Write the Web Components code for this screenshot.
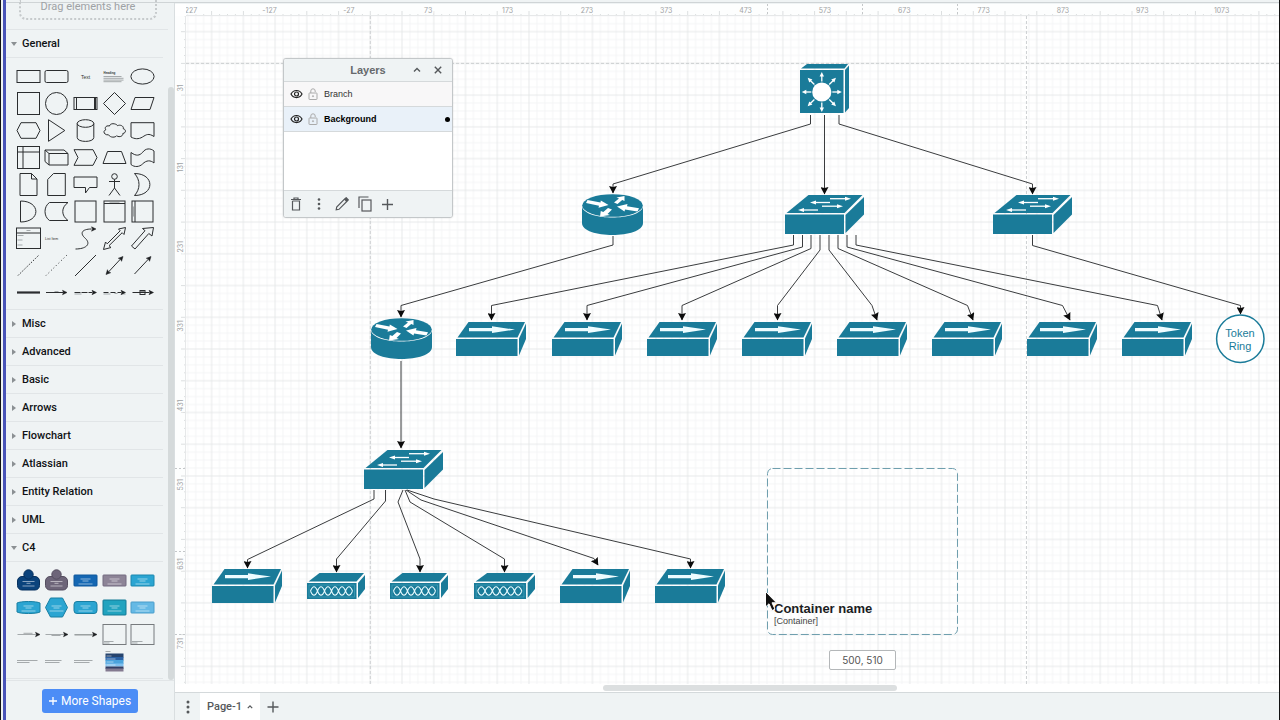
<!DOCTYPE html>
<html lang="en">
<head>
<meta charset="utf-8">
<meta name="viewport" content="width=device-width, initial-scale=1">
<title>Network diagram</title>
<style>
  :root {
    --chrome: #eff3f4;
    --line: #e1e5e7;
    --ink: #1b1d1f;
    --icon: #55585b;
    --muted: #9ea2a5;
    --teal: #1a7b99;
    --blue: #4c8df6;
  }
  body {
    margin: 0;
    font-family: Roboto, "Liberation Sans", sans-serif;
    color: var(--ink);
  }
</style>
</head>
<body>
<app-shell>
  <shape-sidebar slot="sidebar"></shape-sidebar>
  <diagram-board slot="board">
    <layers-panel slot="overlay"></layers-panel>
  </diagram-board>
  <page-tabs slot="tabs"></page-tabs>
</app-shell>

<script>
// Scale of the drawing surface: screen pixels per diagram unit, and the page origin.
const SCALE = 0.7934;
const ORIGIN = { x: 370.3, y: 63.4 };
// Scroll position of the view.
const PAN = { x: 186, y: 16 };

/* ---------- shape library ---------- */

const arrowHead = (x, y, deg = 0) =>
  `<path class="fill" transform="translate(${x} ${y}) rotate(${deg})" d="M0 0L-4.5 -2.2L-3.5 0L-4.5 2.2Z"/>`;

const generalShapes = [
  ['Rectangle', '<rect x="-11.5" y="-6" width="23" height="12"/>'],
  ['Rounded rectangle', '<rect x="-11.5" y="-6" width="23" height="12" rx="1.6"/>'],
  ['Text', '<text y="2" font-size="5" text-anchor="middle">Text</text>'],
  ['Textbox', '<text x="-11" y="-3" font-size="3" font-weight="700">Heading</text><path class="soft" d="M-11 0H7M-11 1.8H9M-11 3.6H9M-11 5.2H7"/>'],
  ['Ellipse', '<ellipse rx="11.6" ry="7.6"/>'],
  ['Square', '<rect x="-11" y="-11" width="22" height="22"/>'],
  ['Circle', '<circle r="11"/>'],
  ['Process', '<rect x="-11.5" y="-6" width="23" height="12"/><path d="M-9 -6V6M9 -6V6M10 -6V6"/>'],
  ['Diamond', '<path d="M0 -11L11 0L0 11L-11 0Z"/>'],
  ['Parallelogram', '<path d="M-7.5 -6H11.5L7.5 6H-11.5Z"/>'],
  ['Hexagon', '<path d="M-7.5 -7.8H7.5L11.5 0L7.5 7.8H-7.5L-11.5 0Z"/>'],
  ['Triangle', '<path d="M-8 -10.8L8.3 0L-8 10.8Z"/>'],
  ['Cylinder', '<path d="M-8.3 -7V7C-8.3 12.2 8.3 12.2 8.3 7V-7"/><ellipse cy="-7" rx="8.3" ry="3.8"/>'],
  ['Cloud', '<path d="M-5 -4.5C-9.5 -5.5 -10 -1.5 -8.500 -.8C-12.500 .5 -10 5 -6 4.300C-4 7.500 1 7 2 5.300C5.500 7.500 9 5 8.300 3C12 2.500 11.500 -1.300 8.800 -1.700C9.500 -5 5 -6 3.200 -4.800C1 -7.500 -4.500 -7.500 -5 -4.500Z"/>'],
  ['Document', '<path d="M-11.5 -7.8H11.5V6C6 2.500 4 4 0 6.500C-4 9 -8 8.500 -11.500 6.500Z"/>'],
  ['Internal storage', '<rect x="-11" y="-11" width="22" height="22"/><path d="M-11 -5.500H11M-5.500 -11V11"/>'],
  ['Cube', '<path d="M-11.5 -7.500H7.500L11.500 -4V7.500H-7.500L-11.500 4ZM-11.500 -7.500L-7.500 -4H11.500M-7.500 -4V7.500"/>'],
  ['Step', '<path d="M-11.500 -7.800H7.500L11.500 0L7.500 7.800H-11.500L-7.500 0Z"/>'],
  ['Trapezoid', '<path d="M-7 -6H7L11.500 6H-11.500Z"/>'],
  ['Tape', '<path d="M-11.500 -5C-6 -1 -3 -2 0 -5C3 -9.500 8 -9.500 11.500 -6.500V5.500C8 2.500 4 2.500 0 6.500C-3 9.500 -8 10 -11.500 7Z"/>'],
  ['Note', '<path d="M-8.500 -11H3L8.500 -5.500V11H-8.500ZM3 -11V-5.500H8.500"/>'],
  ['Card', '<path d="M-3 -11H8.800V11H-8.800V-5Z"/>'],
  ['Callout', '<path d="M-11.500 -7.500H11.500V3H4L0 8.500V3H-11.500Z"/>'],
  ['Actor', '<circle cy="-8" r="2.800"/><path d="M0 -5.200V3.500M-5.500 -3H5.500M0 3.500L-5.500 11M0 3.500L5.500 11"/>'],
  ['Or', '<path d="M-8 -11C12.500 -11 12.500 11 -8 11C-2 4.500 -2 -4.500 -8 -11Z"/>'],
  ['And', '<path d="M-8 -10.500C12.500 -10.500 12.500 10.500 -8 10.500Z"/>'],
  ['Data storage', '<path d="M-7 -9H11.500C4.500 -4 4.500 4 11.500 9H-7C-13 5 -13 -5 -7 -9Z"/>'],
  ['Container', '<rect x="-10.500" y="-10.500" width="21" height="21"/>'],
  ['Titled container', '<rect x="-10.500" y="-10.500" width="21" height="21"/><path d="M-10.500 -8H10.500"/><path class="soft" d="M-5 -9.300H5"/>'],
  ['Horizontal container', '<rect x="-10.500" y="-10.500" width="21" height="21"/><path d="M-7.500 -10.500V10.500"/><path class="soft" d="M-9 -5V5"/>'],
  ['List', '<rect x="-12" y="-10.500" width="24" height="20.500"/><path d="M-12 -5.500H12"/><path class="soft" d="M-2 -8H2M-11 -3H-5M-11 1.500H-6M-11 6.500H-6"/>'],
  ['List item', '<text x="-11.500" y="1" font-size="3.500">List Item</text>'],
  ['Curve', '<path d="M-10 10.500C0 10.500 6 6 0 0C-6 -5 -4 -9.500 6 -9.500"/>' + arrowHead(10.5, -9.5)],
  ['Bidirectional arrow', '<path d="M11 -11L9.500 -4L7.700 -5.800L-5.500 7.200L-3.500 9L-11 11L-9 3.500L-7.300 5.300L5.700 -7.700L4 -9.500Z"/>'],
  ['Arrow', '<path d="M11 -11L9.500 -2.500L6.300 -5L-7.500 10.500L-11 7.500L2.500 -7.800L0 -10Z"/>'],
  ['Dashed line', '<path d="M-10.500 10L10.500 -10.500" stroke-dasharray="1.500 1.500"/>'],
  ['Dotted line', '<path d="M-10.500 10L10.500 -10.500" stroke-dasharray="1 2.500"/>'],
  ['Line', '<path d="M-10.500 10.500L10.500 -10.500"/>'],
  ['Bidirectional connector', '<path d="M-6.500 7L6.500 -7"/>' + arrowHead(8.5, -9, -47) + arrowHead(-8.5, 9, 133)],
  ['Directional connector', '<path d="M-8 8.500L6.500 -7"/>' + arrowHead(8.5, -9, -47)],
  ['Link', '<path d="M-11.500 0H11.500" stroke-width="2.200"/>'],
  ['Connector with label', '<path d="M-10.500 0H7"/><path class="soft" d="M-2 -1H2"/>' + arrowHead(10.5, 0)],
  ['Connector with two labels', '<path d="M-11 0H7" stroke-dasharray="6 1"/><path class="soft" d="M-11 1.500H-4"/>' + arrowHead(11, 0)],
  ['Connector with three labels', '<path d="M-11 0H7" stroke-dasharray="5 2"/><path class="soft" d="M-11 1.500H-4M0 1H3M8 1.500H11"/>' + arrowHead(11, 0)],
  ['Connector with symbol', '<path d="M-10 0H7"/><rect x="-2.500" y="-2" width="5" height="4"/><path d="M-2 -.5H2"/>' + arrowHead(11, 0)]
];

const caption = '<path class="label" d="M-5 -1.500H5M-3 .5H3M-7 3.500H7"/>';
const personShape = (fill, stroke) => `<g fill="${fill}" stroke="${stroke}">
  <rect x="-11" y="-4" width="22" height="13.500" rx="4.500"/><circle cy="-6" r="4.700"/></g>
  <path class="label" d="M-6 1H6M-2 2.800H2M-6 5.500H6"/>`;
const boxShape = (fill, stroke, h = 11, rx = 0.6) =>
  `<rect x="-11.500" y="${-h / 2}" width="23" height="${h}" rx="${rx}" fill="${fill}" stroke="${stroke}"/>${caption}`;

const c4Shapes = [
  ['Person', personShape('#0b437c', '#07315e')],
  ['External person', personShape('#6d6579', '#554e60')],
  ['Software system', boxShape('#1467b3', '#0f589c')],
  ['External system', boxShape('#8d8497', '#736a80')],
  ['Container', boxShape('#2ba5d2', '#1b87ae')],
  ['Database', `<path d="M-11.500 -4.500C-8 -6.500 8 -6.500 11.500 -4.500V4.500C8 6.500 -8 6.500 -11.500 4.500Z" fill="#2ba5d2" stroke="#197fa2"/>${caption}`],
  ['Microservice', `<path d="M-6 -9.500H6L11 0L6 9.500H-6L-11 0Z" fill="#2ba5d2" stroke="#197fa2"/>${caption}`],
  ['Message bus', boxShape('#2ba5d2', '#197fa2', 12, 3)],
  ['Web browser', boxShape('#21a3bf', '#147b96', 15)],
  ['Component', boxShape('#65b9e5', '#4a9dca')],
  ['Relationship', '<path class="soft" d="M-11 0H8M-5 -1.200H4"/>' + arrowHead(11.5, 0)],
  ['Relationship, short', '<path class="soft" d="M-11 0H8M-5 1H4"/>' + arrowHead(11.5, 0)],
  ['Relationship, plain', '<path class="soft" d="M-11 0H9"/><path class="soft" d="M-11 .6H9"/>' + arrowHead(11.5, 0)],
  ['System boundary', '<rect class="frame" x="-11.500" y="-10" width="23" height="20"/><path class="soft" d="M-10.500 7H-1M-10.500 8.500H-5"/>'],
  ['Container boundary', '<rect class="frame" x="-11.500" y="-10" width="23" height="20"/><path class="soft" d="M-10.500 7H0M-10.500 8.500H-5"/>'],
  ['Title', '<path class="soft" d="M-11.500 -1H9M-11.500 1H1"/>'],
  ['Subtitle', '<path class="soft" d="M-11.500 -1H5M-11.500 1H3"/>'],
  ['Description', '<path class="soft" d="M-11.500 -1H7M-11.500 1H4"/>'],
  ['Legend', `<path class="soft" d="M-9 -10H-4"/>
    <rect x="-9" y="-8" width="18" height="4" fill="#26446e" stroke="none"/><rect x="-9" y="-4.500" width="18" height="3.500" fill="#2b62a5" stroke="none"/>
    <rect x="-9" y="-1.500" width="18" height="4" fill="#4aa3dc" stroke="none"/><rect x="-9" y="2" width="18" height="3" fill="#7fc0ee" stroke="none"/>
    <rect x="-9" y="5" width="18" height="2.500" fill="#333f66" stroke="none"/><rect x="-9" y="7" width="18" height="3" fill="#847a90" stroke="none"/>
    <path class="label" d="M-8 -5.500H-3M-8 -2.500H1M-8 .5H-1M-8 3.500H1"/>`]
];

/* ---------- network symbols, each with its own drawing box ---------- */

const thinArrow = (x1, x2, y) => {
  const d = x2 > x1 ? -1 : 1;
  return `<path d="M${x1} ${y}H${x2 + d * 5}" stroke="#fff" stroke-width="1.300"/><path d="M${x2} ${y}L${x2 + d * 6} ${y - 2}V${y + 2}Z" fill="#fff"/>`;
};

const spoke = deg => `<g transform="translate(21.800 28) rotate(${deg})">
  <path d="M10.500 0H17" stroke="#fff" stroke-width="1.300"/><path d="M20 0L15.500 -2.200V2.200Z" fill="#fff"/></g>`;

const waves = () => {
  let a = 'M3.5 8';
  let b = 'M3.5 8';
  for (let i = 0; i < 6; i++) {
    const up = i % 2 ? 8.4 : -8.4;
    a += `q3.500 ${up} 7 0`;
    b += `q3.500 ${-up} 7 0`;
  }
  return `<g transform="translate(0 10)">
    <rect x="2" y="2" width="45.500" height="12" fill="none" stroke="#4ba9c2" stroke-width=".600"/>
    <path d="${a}${b}" fill="none" stroke="#e8fbff" stroke-width="1.100"/></g>`;
};

const symbols = {
  core: {
    w: 49, h: 49,
    art: `<path d="M1 4.500L7 0H48L44.500 4.500Z"/><path d="M45 6L49 1.500V44L45 48.500Z"/><rect y="6" width="43.500" height="43"/>
      <circle cx="21.800" cy="28" r="9.600" fill="#fff"/>${[0, 45, 90, 135, 180, 225, 270, 315].map(spoke).join('')}`
  },
  router: {
    w: 61, h: 41,
    art: `<path d="M0 13C4 27 57 27 61 13V29C61 45 0 45 0 29Z"/><ellipse cx="30.500" cy="11.500" rx="30.300" ry="11.300"/>
      <g fill="#fff"><path d="M5.500 6L18.500 8.500L18.800 6.500L26.500 11L16.500 13.700L17 11.700L4 9Z"/>
      <path d="M55.500 17.500L43 15.500L42.500 17.500L35 12.500L45.500 10L45 12.200L57 14.300Z"/>
      <path d="M32 8.500L37 4.500L34.500 3.500L42.500 2L42.500 7L40.200 6L35.500 10Z"/>
      <path d="M30 15.500L25.500 20L28 21L18 22.500L18.800 17L21.300 18L26 14Z"/></g>`
  },
  switch: {
    w: 79, h: 39,
    art: `<path d="M1.500 18L23.500 0H77.500L59.500 18Z"/><path d="M60.500 20L79 2V19.500L60.500 38Z"/><rect y="19.500" width="59" height="19.500"/>
      ${thinArrow(45, 66, 3.7)}${thinArrow(45, 25, 7.5)}${thinArrow(37, 58, 11.2)}${thinArrow(33, 13, 15)}`
  },
  access: {
    w: 70, h: 34,
    art: `<path d="M1.500 15.500L12.500 0H69L61.500 15.500Z"/><path d="M63 16.500L70 1.500V17L63 33.500Z"/><rect y="17" width="61.500" height="17"/>
      <path d="M13 6H36V4.300L59 7.600L36 11V9.300H13Z" fill="#eefcff"/>`
  },
  hub: {
    w: 58, h: 26,
    art: `<path d="M1.500 8.500L12.500 0H57L49.500 8.500Z"/><path d="M51 10L58 2V16L51 25Z"/><rect y="10" width="49.500" height="16"/>${waves()}`
  }
};

const nodes = [
  ['core', 800, 64], ['router', 582, 194], ['switch', 785, 195], ['switch', 993, 195],
  ['router', 371, 318], ['switch', 364, 450],
  ['access', 456, 322], ['access', 552, 322], ['access', 647, 322], ['access', 742, 322],
  ['access', 837, 322], ['access', 932, 322], ['access', 1027, 322], ['access', 1122, 322],
  ['access', 212, 569], ['hub', 307, 573], ['hub', 390, 573], ['hub', 474, 573, 61],
  ['access', 560, 569], ['access', 655, 569]
];

const edges = [
  '810.500,115 810.500,124 613,184 613,193', '824.500,115 824.500,194', '839,115 839,124 1032.500,184 1032.500,194',
  '613,236 613,245 401,305.500 401,317', '1032.500,235 1032.500,245.500 1240.500,305.500 1240.500,314',
  '793.500,235 793.500,245 491.500,305.500 491.500,320', '802.500,235 802.500,247 587,305.500 587,320',
  '811,235 811,248.500 682,305.500 682,320', '820,235 820,250 777.500,305.500 777.500,320',
  '829,235 829,250 872,305.500 877,320', '838,235 838,248.500 967.500,305.500 973,320',
  '847,235 847,247 1062.500,305.500 1070,320', '856,235 856,245 1157.500,305.500 1162,320',
  '401,361 401,448',
  '374,490 374,499 247.500,559.500 247.500,568', '385.500,490 385.500,501 336.500,559 336.500,572',
  '403,490 398,502 420,559 420,572', '405,490 410,502 504.500,559 504.500,572',
  '406,490 421,500 594,558.500 598,565', '407,490 434,499 690.500,559 690.500,568'
];

/* ---------- elements ---------- */

class AppShell extends HTMLElement {
  constructor() {
    super();
    this.attachShadow({ mode: 'open' }).innerHTML = `
      <style>
        :host {
          display: grid;
          grid-template-columns: auto 169px minmax(0, 1fr);
          grid-template-rows: 3px minmax(0, 1fr) auto;
          height: 100vh;
          box-sizing: border-box;
          border-right: 1px solid #111;
          background: var(--chrome);
        }
        .edge {
          grid-row: 1 / 4;
          width: 2px;
          border-left: 1px solid #111;
          border-right: 3px solid #4954b8;
        }
        .top {
          grid-column: 2 / 4;
          border-bottom: 1px solid #cfd4d6;
        }
        slot[name="sidebar"]::slotted(*) { grid-column: 2; grid-row: 2 / 4; }
        slot[name="board"]::slotted(*) { grid-column: 3; }
        slot[name="tabs"]::slotted(*) { grid-column: 3; }
      </style>
      <div class="edge"></div>
      <div class="top"></div>
      <slot name="sidebar"></slot>
      <slot name="board"></slot>
      <slot name="tabs"></slot>
    `;
  }
}

class ShapeThumb extends HTMLElement {
  constructor() {
    super();
    this.attachShadow({ mode: 'open' });
  }

  set shape([label, art]) {
    this.shadowRoot.innerHTML = `
      <style>
        :host { display: block; }
        button {
          display: flex;
          align-items: center;
          justify-content: center;
          width: 100%;
          height: 27px;
          padding: 0;
          border: 0;
          background: none;
          cursor: grab;
        }
        svg {
          flex: none;
          overflow: visible;
          fill: none;
          stroke: #2b2d2f;
          stroke-width: 1;
        }
        text { fill: #333; stroke: none; font-family: "Liberation Sans", sans-serif; }
        .fill { fill: #1b1d1f; stroke: #1b1d1f; stroke-width: .5; }
        .soft { stroke: #85898c; stroke-width: .7; }
        .frame { stroke: #777b7e; }
        .label { stroke: #fff; stroke-width: .8; opacity: .65; }
      </style>
      <button type="button" aria-label="${label}">
        <svg width="27" height="27" viewBox="-13.5 -13.5 27 27">${art}</svg>
      </button>
    `;
  }
}

class SidebarSection extends HTMLElement {
  constructor() {
    super();
    this.attachShadow({ mode: 'open' }).innerHTML = `
      <style>
        :host { display: block; border-bottom: 1px solid var(--line); margin-right: 5px; }
        button {
          display: flex;
          align-items: center;
          gap: 5px;
          width: 100%;
          height: 27px;
          padding: 0 0 0 5px;
          border: 0;
          background: none;
          font: 500 11px/16px Roboto, "Liberation Sans", sans-serif;
          color: #101214;
          text-align: left;
          cursor: pointer;
        }
        svg { fill: #8b9093; }
        .content { display: none; border-top: 1px solid var(--line); }
        :host([open]) .content { display: block; }
        :host([open]) svg { transform: rotate(90deg); }
      </style>
      <button type="button" aria-expanded="false">
        <svg width="6" height="8" viewBox="0 0 6 8"><path d="M1 1L5 4L1 7Z"/></svg>
        <slot name="title"></slot>
      </button>
      <div class="content"><slot></slot></div>
    `;
  }

  connectedCallback() {
    const button = this.shadowRoot.querySelector('button');
    button.setAttribute('aria-expanded', this.hasAttribute('open'));
    button.addEventListener('click', () => {
      this.toggleAttribute('open');
      button.setAttribute('aria-expanded', this.hasAttribute('open'));
    });
  }
}

class ShapeGrid extends HTMLElement {
  constructor() {
    super();
    this.attachShadow({ mode: 'open' }).innerHTML = `
      <style>
        :host {
          display: grid;
          grid-template-columns: repeat(5, minmax(0, 1fr));
          padding: 5px 6px 3px 8px;
        }
      </style>
    `;
  }

  connectedCallback() {
    const shapes = this.getAttribute('library') === 'c4' ? c4Shapes : generalShapes;
    shapes.forEach(shape => {
      const thumb = document.createElement('shape-thumb');
      thumb.shape = shape;
      this.shadowRoot.appendChild(thumb);
    });
  }
}

class ShapeSidebar extends HTMLElement {
  constructor() {
    super();
    const closed = ['Misc', 'Advanced', 'Basic', 'Arrows', 'Flowchart', 'Atlassian', 'Entity Relation', 'UML'];
    this.attachShadow({ mode: 'open' }).innerHTML = `
      <style>
        :host {
          display: flex;
          flex-direction: column;
          box-sizing: border-box;
          min-height: 0;
          border-right: 1px solid #d9dee0;
        }
        .body { display: flex; flex: 1; min-height: 0; }
        .list { flex: 1; min-width: 0; }
        .scratch {
          display: flex;
          align-items: flex-end;
          height: 17px;
          padding: 0 11px 9px 13px;
          border-bottom: 1px solid var(--line);
        }
        .drop {
          flex: 1;
          height: 18px;
          border: 2px dotted #c6cacc;
          border-top: 0;
          border-radius: 0 0 7px 7px;
          font-size: 11px;
          line-height: 14px;
          text-align: center;
          color: var(--muted);
        }
        .track { width: 6px; padding-top: 84px; display: flex; }
        .thumb { flex: 1; border-radius: 3px; background: #d5dadb; }
        footer {
          display: flex;
          justify-content: center;
          align-items: center;
          height: 39px;
          border-top: 1px solid var(--line);
        }
        .more {
          height: 24px;
          padding: 0 7px;
          border: 0;
          border-radius: 3px;
          background: var(--blue);
          color: #fff;
          font: 400 12px/24px Roboto, "Liberation Sans", sans-serif;
          display: flex;
          align-items: center;
          gap: 4px;
        }
      </style>
      <div class="body">
        <div class="list">
          <div class="scratch"><div class="drop">Drag elements here</div></div>
          <sidebar-section open><span slot="title">General</span><shape-grid library="general"></shape-grid></sidebar-section>
          ${closed.map(name => `<sidebar-section><span slot="title">${name}</span></sidebar-section>`).join('')}
          <sidebar-section open><span slot="title">C4</span><shape-grid library="c4"></shape-grid></sidebar-section>
        </div>
        <div class="track"><div class="thumb"></div></div>
      </div>
      <footer>
        <button class="more" type="button">
          <svg width="8" height="8" viewBox="0 0 8 8" stroke="#fff" stroke-width="1.300"><path d="M4 0V8M0 4H8"/></svg>
          More Shapes
        </button>
      </footer>
    `;
  }
}

class BoardRuler extends HTMLElement {
  constructor() {
    super();
    this.attachShadow({ mode: 'open' });
  }

  connectedCallback() {
    const vertical = this.hasAttribute('vertical');
    const first = vertical ? 31 : -227;
    const count = vertical ? 8 : 14;
    const zero = vertical ? ORIGIN.y - PAN.y : ORIGIN.x - PAN.x;
    const guides = vertical ? [468.5, 551.5, 634.5] : [767.5, 862.5, 957.5];
    let ticks = '';
    let labels = '';
    for (let i = 0; i < 220; i++) {
      const pos = (zero + (i - 30) * 10 * SCALE).toFixed(1);
      const len = (i - 30) % 4 === 0 ? 5 : 2;
      ticks += vertical ? `M11 ${pos}h${-len}` : `M${pos} 12v${-len}`;
    }
    for (let i = 0; i < count; i++) {
      const value = first + i * 100;
      const pos = (zero + value * SCALE).toFixed(1);
      const text = i === 0 && !vertical ? '227' : value;
      labels += vertical
        ? `<text transform="translate(8 ${pos}) rotate(-90)">${text}</text>`
        : `<text x="${i === 0 ? 5 : pos}" y="9">${text}</text>`;
    }
    const marks = guides.map(g => vertical ? `M0 ${g - PAN.y}H11` : `M${g - PAN.x} 0V12`).join('');
    this.shadowRoot.innerHTML = `
      <style>
        :host { display: block; min-width: 0; min-height: 0; background: #fdfefe; overflow: hidden; }
        svg { display: block; width: 100%; height: 100%; overflow: ${vertical ? 'hidden' : 'visible'}; }
        text {
          font: 7px Inter, "Liberation Sans", sans-serif;
          fill: #9fa2a4;
          text-anchor: middle;
          paint-order: stroke;
          stroke: #fdfefe;
          stroke-width: 3px;
        }
      </style>
      <svg>
        <path d="${ticks}" stroke="#dcdfe0" stroke-width="1"/>
        <path d="${vertical ? 'M10.500 0V2000' : 'M0 11.500H4000'}" stroke="#e6e8e9"/>
        <path d="${marks}" stroke="#c4c7c9" stroke-dasharray="2 2"/>
        ${labels}
      </svg>
    `;
  }
}

class NetNode extends HTMLElement {
  constructor() {
    super();
    this.attachShadow({ mode: 'open' });
  }

  connectedCallback() {
    const { w, h, art } = symbols[this.getAttribute('kind')];
    const width = this.getAttribute('width') || w;
    this.shadowRoot.innerHTML = `
      <style>
        :host { display: block; position: absolute; }
        svg { display: block; overflow: visible; fill: var(--teal); }
      </style>
      <svg width="${width}" height="${h}" viewBox="0 0 ${w} ${h}" preserveAspectRatio="none">${art}</svg>
    `;
  }
}

class DiagramBoard extends HTMLElement {
  constructor() {
    super();
    const ox = ORIGIN.x - PAN.x;
    const oy = ORIGIN.y - PAN.y;
    this.attachShadow({ mode: 'open' }).innerHTML = `
      <style>
        :host {
          display: grid;
          grid-template-columns: 11px minmax(0, 1fr);
          grid-template-rows: 12px minmax(0, 1fr) 8px;
          padding-top: 1px;
          min-height: 0;
          background: #fff;
          background-clip: content-box;
        }
        .surface { position: relative; overflow: hidden; }
        .surface > svg { display: block; width: 100%; height: 100%; }
        .edges polyline { fill: none; stroke: #3a3c3e; stroke-width: 1; }
        .ring {
          position: absolute;
          width: 48px;
          height: 36px;
          padding-top: 12px;
          color: var(--teal);
          font: 11px/13px "Liberation Sans", sans-serif;
          text-align: center;
        }
        .drag {
          position: absolute;
          box-sizing: border-box;
          width: 191px;
          height: 167px;
          display: flex;
          flex-direction: column;
          justify-content: flex-end;
          padding: 0 7px 8px;
          font-family: "Liberation Sans", sans-serif;
        }
        .drag svg { position: absolute; inset: 0; width: 100%; height: 100%; }
        .drag strong { font-size: 13px; line-height: 15px; }
        .drag span { font-size: 9px; line-height: 11px; color: #444; }
        .hint {
          position: absolute;
          box-sizing: border-box;
          width: 67px;
          height: 20px;
          border: 1px solid #b4b7b9;
          border-radius: 2px;
          background: #fff;
          color: #555;
          font: 10px/18px Inter, "Liberation Sans", sans-serif;
          text-align: center;
        }
        .cursor { position: absolute; }
        .scroll { grid-column: 1 / 3; display: flex; padding: 1px 0 1px; }
        .bar { flex: 294; border-radius: 3px; background: #dcdfe0; }
        .before { flex: 428; }
        .after { flex: 382; }
      </style>
      <div></div>
      <board-ruler></board-ruler>
      <board-ruler vertical></board-ruler>
      <div class="surface">
        <svg>
          <defs>
            <pattern id="grid" width="40" height="40" patternUnits="userSpaceOnUse" patternTransform="translate(${ox} ${oy}) scale(${SCALE})">
              <path d="M10 0V40M20 0V40M30 0V40M0 10H40M0 20H40M0 30H40" stroke="#f4f5f6" stroke-width="1.200"/>
              <path d="M0 0H40M0 0V40M40 0V40M0 40H40" fill="none" stroke="#e6e8e9" stroke-width="1.200"/>
            </pattern>
            <marker id="tip" markerWidth="9" markerHeight="8" refX="7" refY="4" orient="auto" markerUnits="userSpaceOnUse">
              <path d="M0 0L7.500 4L0 8L1 4Z" fill="#0c0c0c"/>
            </marker>
          </defs>
          <rect width="100%" height="100%" fill="url(#grid)"/>
          <g stroke="#cdd0d2" stroke-dasharray="3 2">
            <path d="M${ox} 0V2000M${ox + 827 * SCALE} 0V2000M0 ${oy}H4000"/>
          </g>
          <g class="edges" transform="translate(${-PAN.x} ${-PAN.y})">
            ${edges.map(points => `<polyline points="${points}" marker-end="url(#tip)"/>`).join('')}
            <circle cx="1240.300" cy="338.700" r="23.700" fill="#fff" stroke="#1a7b99" stroke-width="1.500"/>
          </g>
        </svg>
        <div class="nodes"></div>
        <div class="ring" style="left: 1030px; top: 299px">Token Ring</div>
        <div class="drag" style="left: 581px; top: 452px">
          <svg><rect x=".5" y=".5" width="190" height="166" rx="5" fill="none" stroke="#6f9fae" stroke-dasharray="8 3"/></svg>
          <strong>Container name</strong>
          <span>[Container]</span>
        </div>
        <div class="hint" style="left: 643px; top: 634px">500, 510</div>
        <svg class="cursor" style="left: 578px; top: 574px; width: 14px; height: 22px" viewBox="0 0 14 22">
          <path d="M1.500 1.500V17L5 13.800L8 20.500L11 19.200L8 12.800H12.500Z" fill="#111" stroke="#fff" stroke-width="1"/>
        </svg>
        <slot name="overlay"></slot>
      </div>
      <div class="scroll"><div class="before"></div><div class="bar"></div><div class="after"></div></div>
    `;
  }

  connectedCallback() {
    const layer = this.shadowRoot.querySelector('.nodes');
    nodes.forEach(([kind, x, y, width]) => {
      const node = document.createElement('net-node');
      node.setAttribute('kind', kind);
      if (width) node.setAttribute('width', width);
      node.style.left = `${x - PAN.x}px`;
      node.style.top = `${y - PAN.y}px`;
      layer.appendChild(node);
    });
  }
}

class LayerRow extends HTMLElement {
  constructor() {
    super();
    this.attachShadow({ mode: 'open' }).innerHTML = `
      <style>
        :host {
          display: flex;
          align-items: center;
          height: 24px;
          padding: 0 2px 0 6px;
          border-bottom: 1px solid #d5d9db;
          background: #f8f7f8;
          font: 9px/12px "Liberation Sans", sans-serif;
          color: #333;
        }
        :host([current]) { background: #e9f1f9; font-weight: 700; color: #000; }
        button { display: flex; padding: 0; border: 0; background: none; }
        .lock { margin: 0 6px 0 5px; }
        .name { flex: 1; }
        .dot { display: none; width: 5px; height: 5px; border-radius: 50%; background: #000; }
        :host([current]) .dot { display: block; }
      </style>
      <button type="button" aria-label="Show layer">
        <svg width="13" height="12" viewBox="0 0 13 12" fill="none" stroke="#222" stroke-width="1.200">
          <path d="M1 6C3.500 1.300 9.500 1.300 12 6C9.500 10.700 3.500 10.700 1 6Z"/><circle cx="6.500" cy="6" r="2"/>
        </svg>
      </button>
      <button class="lock" type="button" aria-label="Lock layer">
        <svg width="10" height="12" viewBox="0 0 10 12" fill="none" stroke="#aaa" stroke-width="1">
          <rect x="1" y="5" width="8" height="6.500" rx=".5"/><path d="M2.800 5V3A2.200 2.200 0 0 1 7.200 3V4"/><circle cx="5" cy="8.200" r=".6"/>
        </svg>
      </button>
      <span class="name"><slot></slot></span>
      <span class="dot"></span>
    `;
  }
}

class LayersPanel extends HTMLElement {
  constructor() {
    super();
    this.attachShadow({ mode: 'open' }).innerHTML = `
      <style>
        :host {
          display: flex;
          flex-direction: column;
          position: absolute;
          left: 97px;
          top: 42px;
          box-sizing: border-box;
          width: 170px;
          height: 160px;
          border: 1px solid #c3c7c9;
          border-radius: 3px;
          background: #fff;
          overflow: hidden;
          box-shadow: 0 0 2px #0002;
        }
        header {
          display: grid;
          grid-template-columns: 18px 21px minmax(0, 1fr) 21px 18px;
          align-items: center;
          height: 22px;
          border-bottom: 1px solid #d5d9db;
          background: var(--chrome);
        }
        h2 {
          grid-column: 3;
          margin: 0;
          font: 700 11px/14px "Liberation Sans", sans-serif;
          text-align: center;
          color: #66696c;
        }
        button {
          display: flex;
          align-items: center;
          justify-content: center;
          padding: 0;
          border: 0;
          background: none;
        }
        header button { justify-content: flex-start; }
        svg { fill: none; stroke: var(--icon); stroke-width: 1.400; }
        .rows { flex: 1; }
        footer {
          display: flex;
          height: 26px;
          border-top: 1px solid #d5d9db;
          background: var(--chrome);
        }
        footer button { width: 23px; }
      </style>
      <header>
        <h2>Layers</h2>
        <button type="button" aria-label="Collapse"><svg width="8" height="8" viewBox="0 0 8 8"><path d="M1 5.500L4 2.500L7 5.500"/></svg></button>
        <button type="button" aria-label="Close"><svg width="8" height="8" viewBox="0 0 8 8"><path d="M.8 .8L7.200 7.200M7.200 .8L.8 7.200"/></svg></button>
      </header>
      <div class="rows">
        <layer-row>Branch</layer-row>
        <layer-row current>Background</layer-row>
      </div>
      <footer>
        <button type="button" aria-label="Delete"><svg width="12" height="14" viewBox="0 0 12 14" style="stroke-width:1.200"><path d="M1 2.500H11M4 2V1H8V2M2.500 4V13H9.500V4H2.500"/></svg></button>
        <button type="button" aria-label="Options"><svg width="4" height="14" viewBox="0 0 4 14"><g fill="#55585b" stroke="none"><circle cx="2" cy="2.500" r="1.300"/><circle cx="2" cy="7" r="1.300"/><circle cx="2" cy="11.500" r="1.300"/></g></svg></button>
        <button type="button" aria-label="Rename"><svg width="14" height="14" viewBox="0 0 14 14" style="stroke-width:1.200"><path d="M1.200 12.800L1.700 10L9.500 2.200L11.800 4.500L4 12.300ZM10.300 1.400L11.200 .7L13.300 2.800L12.600 3.700Z"/></svg></button>
        <button type="button" aria-label="Duplicate"><svg width="14" height="16" viewBox="0 0 14 16" style="stroke-width:1.200"><rect x="4" y="4" width="9" height="11"/><path d="M1 12V1H10.500"/></svg></button>
        <button type="button" aria-label="Add layer"><svg width="11" height="11" viewBox="0 0 11 11"><path d="M5.500 0V11M0 5.500H11"/></svg></button>
      </footer>
    `;
  }
}

class PageTabs extends HTMLElement {
  constructor() {
    super();
    this.attachShadow({ mode: 'open' }).innerHTML = `
      <style>
        :host {
          display: flex;
          height: 27px;
          border-top: 1px solid #d4d9db;
          background: var(--chrome);
        }
        button {
          display: flex;
          align-items: center;
          justify-content: center;
          width: 25px;
          padding: 0;
          border: 0;
          background: none;
          color: #55585b;
          font: 500 11px/16px Roboto, "Liberation Sans", sans-serif;
        }
        .tab { width: 60px; gap: 5px; background: #fff; }
        svg { fill: none; stroke: var(--icon); stroke-width: 1.400; }
      </style>
      <button type="button" aria-label="Pages"><svg width="4" height="14" viewBox="0 0 4 14"><g fill="#55585b" stroke="none"><circle cx="2" cy="2" r="1.500"/><circle cx="2" cy="7" r="1.500"/><circle cx="2" cy="12" r="1.500"/></g></svg></button>
      <button class="tab" type="button">Page-1<svg width="6" height="6" viewBox="0 0 6 6" style="stroke-width:1.200"><path d="M.8 4.200L3 1.800L5.200 4.200"/></svg></button>
      <button type="button" aria-label="Insert page"><svg width="12" height="12" viewBox="0 0 12 12"><path d="M6 .5V11.500M.5 6H11.500"/></svg></button>
    `;
  }
}

customElements.define('shape-thumb', ShapeThumb);
customElements.define('shape-grid', ShapeGrid);
customElements.define('sidebar-section', SidebarSection);
customElements.define('shape-sidebar', ShapeSidebar);
customElements.define('board-ruler', BoardRuler);
customElements.define('net-node', NetNode);
customElements.define('layer-row', LayerRow);
customElements.define('layers-panel', LayersPanel);
customElements.define('diagram-board', DiagramBoard);
customElements.define('page-tabs', PageTabs);
customElements.define('app-shell', AppShell);
</script>
</body>
</html>
